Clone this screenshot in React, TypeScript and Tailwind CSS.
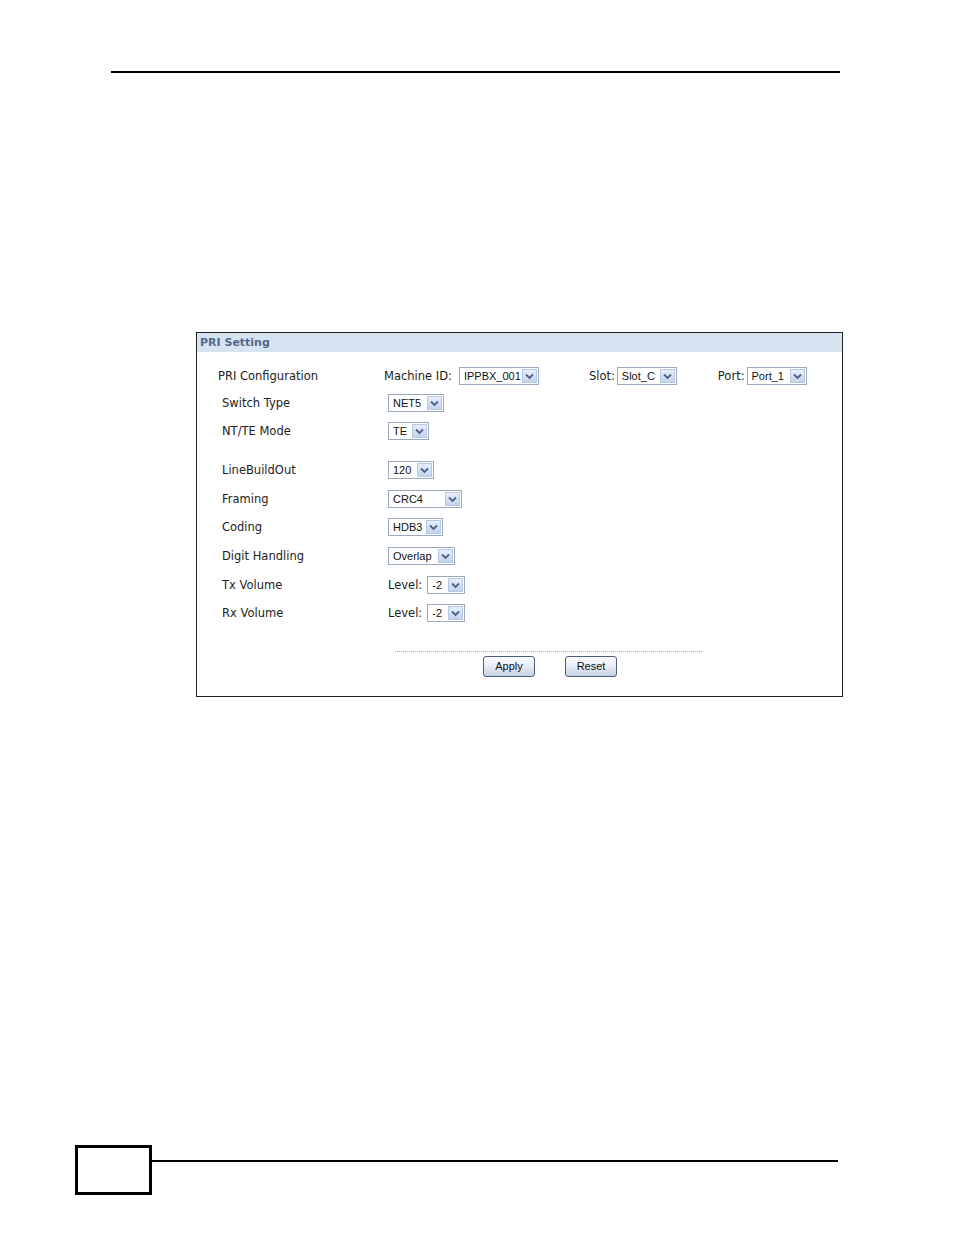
import React from 'react';

const labelFont = { fontFamily: '"DejaVu Sans", Verdana, sans-serif' };
const ctrlFont = { fontFamily: '"Liberation Sans", Arial, sans-serif' };

function Chevron() {
  return (
    <svg width="9" height="7" viewBox="0 0 9 7">
      <path d="M1 1.5 L4.5 5 L8 1.5" fill="none" stroke="#4d6185" strokeWidth="1.8" />
    </svg>
  );
}

function Select({ value, width }: { value: string; width: number }) {
  return (
    <div
      className="flex h-[18px] items-stretch border border-[#9aa9bd] bg-white"
      style={{ width }}
    >
      <div className="flex flex-1 items-center pl-[4px] text-[11px] text-[#111]" style={ctrlFont}>
        {value}
      </div>
      <div className="m-[1px] flex w-[15px] items-center justify-center border border-[#b8c8e0] bg-gradient-to-b from-[#e6eefb] to-[#c3d3ef]">
        <Chevron />
      </div>
    </div>
  );
}

function Text({ children }: { children: React.ReactNode }) {
  return (
    <span className="pt-[2px] text-[11.5px] text-[#222]" style={labelFont}>
      {children}
    </span>
  );
}

function Row({
  label,
  children,
  className,
}: {
  label: string;
  children: React.ReactNode;
  className: string;
}) {
  return (
    <div className={`flex h-[20px] items-center ${className}`}>
      <div className="w-[191px] pl-[25px] pt-[2px] text-[11.5px] text-[#222]" style={labelFont}>
        {label}
      </div>
      {children}
    </div>
  );
}

function Level() {
  return (
    <div className="flex items-center gap-[5px]">
      <Text>Level:</Text>
      <Select value="-2" width={38} />
    </div>
  );
}

function Btn({ text }: { text: string }) {
  return (
    <button
      className="h-[21px] w-[52px] rounded-[3px] border border-[#4a5d82] bg-gradient-to-b from-[#fbfcfe] via-[#e7ecf6] to-[#c6d0e4] text-[11px] text-[#111]"
      style={ctrlFont}
    >
      {text}
    </button>
  );
}

export default function App() {
  return (
    <div className="flex h-[1235px] w-[954px] flex-col bg-white">
      {/* page header rule */}
      <div className="ml-[111px] mt-[71px] h-[2px] w-[729px] bg-black" />

      {/* PRI Setting panel */}
      <div className="ml-[196px] mt-[259px] w-[647px] border border-[#222] pb-[19px]">
        <div
          className="flex h-[19px] items-center bg-[#d6e4f1] pl-[3px] pt-[1px] text-[11px] font-bold text-[#56688c]"
          style={labelFont}
        >
          PRI Setting
        </div>

        <div className="mt-[14px] flex h-[20px] items-center">
          <div className="w-[187px] pl-[21px] pt-[2px] text-[11.5px] text-[#222]" style={labelFont}>
            PRI Configuration
          </div>
          <div className="flex items-center gap-[7px]">
            <Text>Machine ID:</Text>
            <Select value="IPPBX_001" width={80} />
          </div>
          <div className="ml-[50px] flex items-center gap-[2px]">
            <Text>Slot:</Text>
            <Select value="Slot_C" width={60} />
          </div>
          <div className="ml-[41px] flex items-center gap-[2px]">
            <Text>Port:</Text>
            <Select value="Port_1" width={60} />
          </div>
        </div>

        <Row label="Switch Type" className="mt-[7px]">
          <Select value="NET5" width={56} />
        </Row>
        <Row label="NT/TE Mode" className="mt-[8px]">
          <Select value="TE" width={41} />
        </Row>
        <Row label="LineBuildOut" className="mt-[19px]">
          <Select value="120" width={46} />
        </Row>
        <Row label="Framing" className="mt-[9px]">
          <Select value="CRC4" width={74} />
        </Row>
        <Row label="Coding" className="mt-[8px]">
          <Select value="HDB3" width={55} />
        </Row>
        <Row label="Digit Handling" className="mt-[9px]">
          <Select value="Overlap" width={67} />
        </Row>
        <Row label="Tx Volume" className="mt-[9px]">
          <Level />
        </Row>
        <Row label="Rx Volume" className="mt-[8px]">
          <Level />
        </Row>

        <div className="ml-[198px] mt-[28px] w-[307px] border-t border-dotted border-[#aaa]" />
        <div className="mt-[4px] flex pl-[286px]">
          <Btn text="Apply" />
          <div className="w-[30px]" />
          <Btn text="Reset" />
        </div>
      </div>

      {/* page footer */}
      <div className="mt-auto mb-[40px] flex items-start">
        <div className="ml-[75px] h-[50px] w-[77px] border-[3px] border-black" />
        <div className="mt-[15px] h-[2px] w-[686px] bg-black" />
      </div>
    </div>
  );
}
